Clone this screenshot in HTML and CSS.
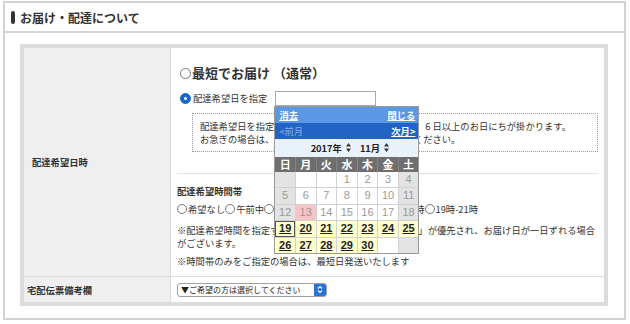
FILE: index.html
```html
<!DOCTYPE html>
<html lang="ja">

<head>
    <meta charset="utf-8">
    <title>お届け・配達について</title>
    <link rel="stylesheet" href="styles.css">
</head>

<body>
    <div class="frame">
        <div class="frame-head"><span class="mark"></span>お届け・配達について</div>
        <div class="frame-body">
            <table class="form">
                <tr class="row-date">
                    <th class="label-date">配達希望日時</th>
                    <td class="field">
                        <div class="fast"><span class="radio big"></span>最短でお届け （通常）</div>
                        <div class="pick">
                            <span class="radio big on"></span>配達希望日を指定
                            <div class="date-wrap">
                                <input type="text" class="date-input">
                                <div class="cal">
                                    <div class="cal-bar1"><a>消去</a><a>閉じる</a></div>
                                    <div class="cal-bar2"><span class="off">&lt;前月</span><a>次月&gt;</a></div>
                                    <div class="cal-sel">
                                        <span>2017年</span>
                                        <svg width="5" height="9" viewBox="0 0 5 9"><path d="M2.5 0L5 3.5H0Z M2.5 9L0 5.5H5Z" fill="#333"/></svg>
                                        <span class="month">11月</span>
                                        <svg width="5" height="9" viewBox="0 0 5 9"><path d="M2.5 0L5 3.5H0Z M2.5 9L0 5.5H5Z" fill="#333"/></svg>
                                    </div>
                                    <div class="cal-week">
                                        <span>日</span><span>月</span><span>火</span><span>水</span><span>木</span><span>金</span><span>土</span>
                                    </div>
                                    <div class="cal-days">
                                        <span class="we"></span><span></span><span></span><span>1</span><span>2</span><span>3</span><span class="we">4</span>
                                        <span class="we">5</span><span>6</span><span>7</span><span>8</span><span>9</span><span>10</span><span class="we">11</span>
                                        <span class="we">12</span><span class="today">13</span><span>14</span><span>15</span><span>16</span><span>17</span><span class="we">18</span>
                                        <span class="open sel">19</span><span class="open">20</span><span class="open">21</span><span class="open">22</span><span class="open">23</span><span class="open">24</span><span class="open">25</span>
                                        <span class="open">26</span><span class="open">27</span><span class="open">28</span><span class="open">29</span><span class="open">30</span><span></span><span class="we"></span>
                                    </div>
                                </div>
                            </div>
                        </div>
                        <div class="notice">
                            配達希望日を指定された場合、お届けまでに通常は、 6 日以上のお日にちが掛かります。<br>
                            お急ぎの場合は、上記の「最短でお届け」をご選択ください。
                        </div>
                        <div class="sep"></div>
                        <div class="time-title">配達希望時間帯</div>
                        <div class="times">
                            <span class="radio"></span>希望なし<span class="radio"></span>午前中<span class="radio"></span>14時-16時<span class="radio"></span>16時-18時<span class="radio"></span>18時-20時<span class="radio"></span>19時-21時
                        </div>
                        <div class="note">
                            ※配達希望時間を指定すると、運送会社の「お届け指定日」が優先され、お届け日が一日ずれる場合<br>
                            がございます。
                        </div>
                        <div class="note2">※時間帯のみをご指定の場合は、最短日発送いたします</div>
                    </td>
                </tr>
                <tr class="row-memo">
                    <th>宅配伝票備考欄</th>
                    <td class="field-memo">
                        <div class="select">
                            <span class="select-text">▼ご希望の方は選択してください</span>
                            <span class="stepper">
                                <svg width="6" height="9" viewBox="0 0 6 9"><path d="M1 3.5L3 1.5L5 3.5 M1 5.5L3 7.5L5 5.5" fill="none" stroke="#fff" stroke-width="1.2"/></svg>
                            </span>
                        </div>
                    </td>
                </tr>
            </table>
        </div>
    </div>
</body>

</html>
```

FILE: styles.css
```css
body {
    margin: 0;
    font-family: "Noto Sans CJK JP", "Noto Sans", sans-serif;
    font-size: 9.3px;
    color: #333;
    background: #fff;
}

.frame {
    margin: 1px 4px 0 3px;
    height: 319px;
    box-sizing: border-box;
    border: 2px solid #d2d2d2;
}

.frame-head {
    height: 28px;
    border-bottom: 2px solid #d6d6d6;
    display: flex;
    align-items: center;
    padding-left: 6px;
    font-size: 12px;
    font-weight: bold;
    color: #333;
}

.mark {
    width: 4px;
    height: 13px;
    border-radius: 2px;
    background: #333;
    margin-right: 5px;
}

.frame-body {
    padding: 11px 16px 0 15px;
}

.form {
    width: 100%;
    border: 4px solid #dcdcdc;
    border-spacing: 0;
}

.form th {
    width: 143px;
    padding: 0 0 0 3px;
    background: #efefef;
    border-right: 1px solid #dcdcdc;
    text-align: left;
    font-weight: bold;
    vertical-align: middle;
}

.form .label-date {
    width: 138px;
    padding-left: 8px;
}

.row-date th,
.row-date td {
    border-bottom: 1px solid #dcdcdc;
}

.field {
    padding: 0 6px 8px 6px;
    vertical-align: top;
}

.field-memo {
    height: 25px;
    padding: 0 6px;
    vertical-align: middle;
}

/* radios */
.radio {
    display: inline-block;
    width: 10px;
    height: 10px;
    box-sizing: border-box;
    border: 1px solid #777;
    border-radius: 50%;
    background: #fff;
    margin-right: 1px;
    flex: none;
}

.radio.big {
    width: 11px;
    height: 11px;
}

.radio.on {
    position: relative;
    background: #1b66c9;
    border-color: #1b66c9;
}

.radio.on::after {
    content: "";
    position: absolute;
    left: 3px;
    top: 3px;
    width: 3px;
    height: 3px;
    border-radius: 50%;
    background: #fff;
}

.fast {
    margin-top: 15px;
    padding-left: 3px;
    line-height: 20px;
    font-size: 13px;
    font-weight: bold;
    display: flex;
    align-items: center;
}

.pick {
    margin-top: 7px;
    padding-left: 3px;
    height: 16px;
    display: flex;
    align-items: center;
}

.pick .radio {
    margin-right: 2px;
}

.date-wrap {
    position: relative;
    margin-left: 8px;
}

.date-input {
    display: block;
    width: 101px;
    height: 15px;
    box-sizing: border-box;
    border: 1px solid #a9a9a9;
    padding: 0;
    margin: 0;
}

/* calendar popup */
.cal {
    position: absolute;
    z-index: 10;
    top: 15px;
    left: -1px;
    width: 145px;
    box-sizing: border-box;
    border: 1px solid #9a9a9a;
    background: #fff;
    font-size: 9.3px;
}

.cal-bar1,
.cal-bar2 {
    height: 16px;
    display: flex;
    justify-content: space-between;
    align-items: center;
    padding: 0 3px 0 4px;
}

.cal-bar1 {
    background: #5a98e6;
}

.cal-bar2 {
    background: #2164c6;
}

.cal-bar1 a,
.cal-bar2 a {
    color: #fff;
    font-weight: bold;
    text-decoration: underline;
}

.cal-bar2 .off {
    color: #86aee6;
}

.cal-sel {
    height: 18px;
    background: #e9f1fb;
    display: flex;
    justify-content: center;
    align-items: center;
    padding-left: 6px;
    font-weight: bold;
    color: #222;
}

.cal-sel svg {
    margin-left: 4px;
}

.cal-sel .month {
    margin-left: 9px;
}

.cal-week,
.cal-days {
    display: grid;
    grid-template-columns: repeat(7, 1fr);
    gap: 1px;
}

.cal-week {
    height: 15px;
    background: #858585;
}

.cal-week span {
    background: #6e6e6e;
    color: #fff;
    font-weight: bold;
    font-size: 11px;
    line-height: 15px;
    text-align: center;
}

.cal-days {
    grid-auto-rows: 15.6px;
    background: #d2d2d2;
}

.cal-days span {
    background: #fff;
    font-family: "Liberation Sans", Arial, sans-serif;
    font-size: 11px;
    line-height: 15.6px;
    text-align: center;
    color: #999;
}

.cal-days .we {
    background: #e3e3e3;
}

.cal-days .today {
    background: #f6c4c4;
}

.cal-days .open {
    background: #ffffcc;
    color: #222;
    font-weight: bold;
    text-decoration: underline;
}

.cal-days .sel {
    box-shadow: inset 0 0 0 1px #555;
}

.notice {
    margin: 7px 0 0 15px;
    border: 1px dotted #999;
    padding: 6px 7px 5px;
    line-height: 13px;
}

.sep {
    margin-top: 21px;
    border-top: 1px solid #e3e3e3;
}

.time-title {
    margin-top: 11px;
    line-height: 13px;
    font-weight: bold;
}

.times {
    margin-top: 4px;
    line-height: 14px;
    display: flex;
    align-items: center;
}

.note {
    margin-top: 8px;
    line-height: 13px;
}

.note2 {
    margin-top: 5px;
    line-height: 13px;
}

/* select box */
.select {
    display: flex;
    align-items: center;
    width: 150px;
    height: 14px;
    box-sizing: border-box;
    border: 1px solid #a0a0a0;
    border-radius: 3px;
    background: #fff;
    padding-left: 3px;
    font-size: 8px;
    color: #222;
}

.stepper {
    margin-left: auto;
    width: 12px;
    height: 12px;
    border-radius: 0 2px 2px 0;
    background: #2a72d8;
    display: flex;
    align-items: center;
    justify-content: center;
}
```
